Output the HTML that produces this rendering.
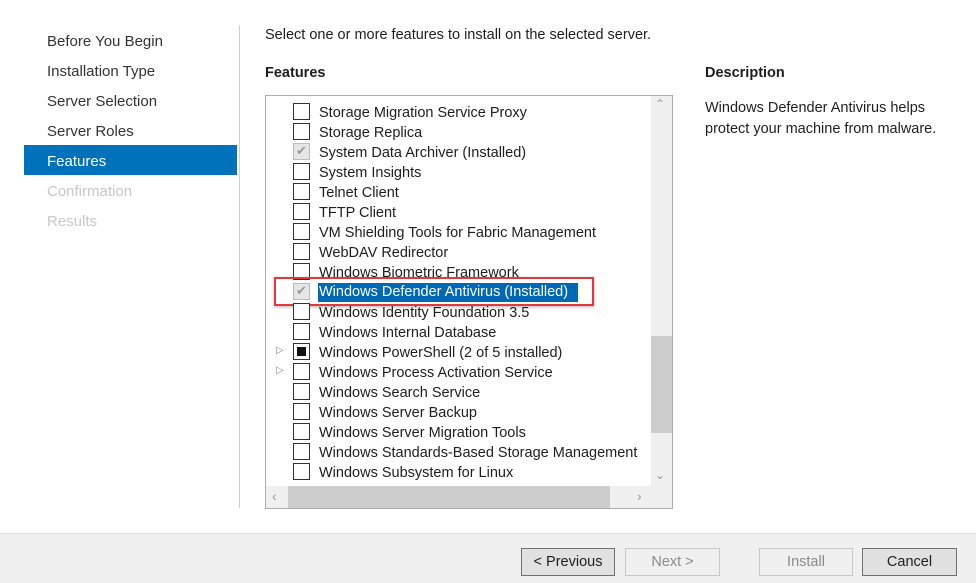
<!DOCTYPE html><html><head><style>
*{margin:0;padding:0;box-sizing:border-box}
body{width:976px;height:583px;background:#fff;font-family:"Liberation Sans",sans-serif;font-size:14.5px;color:#1e1e1e;position:relative;overflow:hidden}
.a{position:absolute;white-space:nowrap}
.nav{left:47px;font-size:15px;color:#333}
.cb{position:absolute;left:293px;width:17px;height:17px;border:1px solid #333;background:#fff}
.cb.g{border-color:#bbb;background:#e6e6e6}
.t{position:absolute;left:319px;font-size:14.5px;line-height:20px;color:#1e1e1e}
.btn{position:absolute;top:548px;height:28px;border:1px solid #707070;background:#e1e1e1;text-align:center;line-height:26px;font-size:14.5px}
.btn.d{border-color:#c8c8c8;background:#f0f0f0;color:#8a8a8a}
</style></head><body>
<div class="a nav" style="top:33px">Before You Begin</div>
<div class="a nav" style="top:63px">Installation Type</div>
<div class="a nav" style="top:93px">Server Selection</div>
<div class="a nav" style="top:123px">Server Roles</div>
<div class="a" style="left:24px;top:145px;width:213px;height:30px;background:#0072bc"></div>
<div class="a nav" style="top:153px;color:#fff">Features</div>
<div class="a nav" style="top:183px;color:#c8c8c8">Confirmation</div>
<div class="a nav" style="top:213px;color:#c8c8c8">Results</div>
<div class="a" style="left:239px;top:25px;width:1px;height:483px;background:#d0d0d0"></div>
<div class="a" style="left:265px;top:27px;font-size:14.5px">Select one or more features to install on the selected server.</div>
<div class="a" style="left:265px;top:65px;font-size:14.5px;font-weight:600">Features</div>
<div class="a" style="left:705px;top:65px;font-size:14.5px;font-weight:600">Description</div>
<div class="a" style="left:705px;top:98px;font-size:14.5px;line-height:21px">Windows Defender Antivirus helps<br>protect your machine from malware.</div>
<div class="a" style="left:265px;top:95px;width:408px;height:414px;border:1px solid #abadb3;overflow:hidden"></div>
<div class="a" style="left:651px;top:96px;width:21px;height:390px;background:#f0f0f0"></div>
<div class="a" style="left:651px;top:336px;width:21px;height:97px;background:#cdcdcd"></div>
<div class="a" style="left:655px;top:97px;color:#999;font-size:12px">&#8963;</div>
<div class="a" style="left:655px;top:468px;color:#999;font-size:12px">&#8964;</div>
<div class="a" style="left:266px;top:486px;width:385px;height:22px;background:#f0f0f0"></div>
<div class="a" style="left:288px;top:486px;width:322px;height:22px;background:#cdcdcd"></div>
<div class="a" style="left:272px;top:488px;color:#999;font-size:14px">&#8249;</div>
<div class="a" style="left:637px;top:488px;color:#999;font-size:14px">&#8250;</div>
<div class="a" style="left:651px;top:486px;width:21px;height:22px;background:#f0f0f0"></div>

<div class="cb" style="top:103px"></div><div class="t" style="top:103px">Storage Migration Service Proxy</div>
<div class="cb" style="top:123px"></div><div class="t" style="top:123px">Storage Replica</div>
<div class="cb g" style="top:143px"></div><div class="a" style="left:296px;top:143px;color:#999;font-size:13px">✔</div><div class="t" style="top:143px">System Data Archiver (Installed)</div>
<div class="cb" style="top:163px"></div><div class="t" style="top:163px">System Insights</div>
<div class="cb" style="top:183px"></div><div class="t" style="top:183px">Telnet Client</div>
<div class="cb" style="top:203px"></div><div class="t" style="top:203px">TFTP Client</div>
<div class="cb" style="top:223px"></div><div class="t" style="top:223px">VM Shielding Tools for Fabric Management</div>
<div class="cb" style="top:243px"></div><div class="t" style="top:243px">WebDAV Redirector</div>
<div class="cb" style="top:263px"></div><div class="t" style="top:263px">Windows Biometric Framework</div>
<div class="cb g" style="top:283px"></div><div class="a" style="left:296px;top:283px;color:#999;font-size:13px">✔</div>
<div class="a" style="left:318px;top:283px;width:260px;height:19px;background:#0068b4"></div><div class="t" style="top:282px;color:#fff">Windows Defender Antivirus (Installed)</div>
<div class="a" style="left:274px;top:277px;width:320px;height:29px;border:2px solid #e0393e;box-shadow:0 1px 3px rgba(0,0,0,.3)"></div>
<div class="cb" style="top:303px"></div><div class="t" style="top:303px">Windows Identity Foundation 3.5</div>
<div class="cb" style="top:323px"></div><div class="t" style="top:323px">Windows Internal Database</div>
<div class="a" style="left:276px;top:345px;color:#888;font-size:10px">▷</div>
<div class="cb" style="top:343px"></div><div class="a" style="left:297px;top:347px;width:9px;height:9px;background:#111"></div><div class="t" style="top:343px">Windows PowerShell (2 of 5 installed)</div>
<div class="a" style="left:276px;top:365px;color:#888;font-size:10px">▷</div>
<div class="cb" style="top:363px"></div><div class="t" style="top:363px">Windows Process Activation Service</div>
<div class="cb" style="top:383px"></div><div class="t" style="top:383px">Windows Search Service</div>
<div class="cb" style="top:403px"></div><div class="t" style="top:403px">Windows Server Backup</div>
<div class="cb" style="top:423px"></div><div class="t" style="top:423px">Windows Server Migration Tools</div>
<div class="cb" style="top:443px"></div><div class="t" style="top:443px">Windows Standards-Based Storage Management</div>
<div class="cb" style="top:463px"></div><div class="t" style="top:463px">Windows Subsystem for Linux</div>

<div class="a" style="left:0;top:533px;width:976px;height:50px;background:#f0f0f0;border-top:1px solid #dfdfdf"></div>
<div class="btn" style="left:521px;width:94px">&lt; Previous</div>
<div class="btn d" style="left:625px;width:95px">Next &gt;</div>
<div class="btn d" style="left:759px;width:94px">Install</div>
<div class="btn" style="left:862px;width:95px">Cancel</div>
</body></html>
